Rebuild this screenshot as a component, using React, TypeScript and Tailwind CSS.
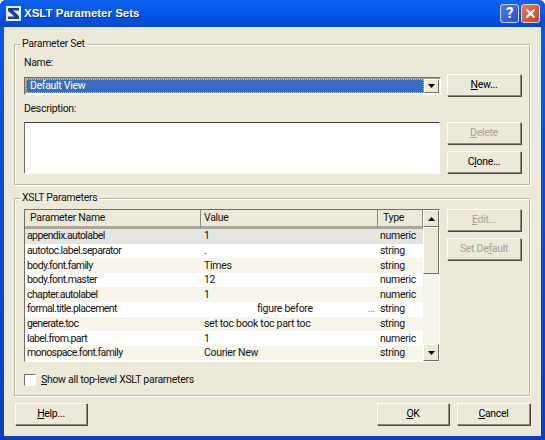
import type { ReactNode } from "react";

const rows = [
  ["appendix.autolabel", "1", "numeric"],
  ["autotoc.label.separator", ".", "string"],
  ["body.font.family", "Times", "string"],
  ["body.font.master", "12", "numeric"],
  ["chapter.autolabel", "1", "numeric"],
  ["formal.title.placement", "figure before", "string"],
  ["generate.toc", "set toc book toc part toc", "string"],
  ["label.from.part", "1", "numeric"],
  ["monospace.font.family", "Courier New", "string"],
];

const rowColors = [
  "bg-[#e6e4e0]",
  "bg-white",
  "bg-[#f8f6ea]",
  "bg-white",
  "bg-[#f8f6ea]",
  "bg-white",
  "bg-[#f8f6ea]",
  "bg-white",
  "bg-[#f8f6ea]",
];

function Btn({
  children,
  disabled,
  className = "",
}: {
  children: ReactNode;
  disabled?: boolean;
  className?: string;
}) {
  return (
    <button
      className={`flex h-[22px] items-center justify-center border border-t-white border-l-white border-r-[#8c8a7c] border-b-[#8c8a7c] bg-[#ece9d8] shadow-[1px_1px_0_#4a4940] ${disabled ? "text-[#a5a293]" : "text-black"} ${className}`}
    >
      {children}
    </button>
  );
}

function Group({
  title,
  children,
  className = "",
}: {
  title: string;
  children: ReactNode;
  className?: string;
}) {
  return (
    <fieldset
      className={`border border-[#bdbaa8] shadow-[inset_1px_1px_0_#fff,1px_1px_0_#fff] ${className}`}
    >
      <legend className="-ml-[4px] px-[2px] leading-[12px]">{title}</legend>
      {children}
    </fieldset>
  );
}

function ScrollArrow({ up }: { up?: boolean }) {
  return (
    <div className="flex h-[17px] w-[16px] shrink-0 items-center justify-center border border-t-white border-l-white border-r-[#716f64] border-b-[#716f64] bg-[#ece9d8]">
      <svg width="7" height="4" viewBox="0 0 7 4">
        <path d={up ? "M3.5 0L7 4H0z" : "M0 0h7L3.5 4z"} fill="#000" />
      </svg>
    </div>
  );
}

export default function App() {
  return (
    <div className="flex h-[440px] w-[545px] flex-col overflow-hidden rounded-t-[6px] bg-gradient-to-b from-[#0a5ae8] to-[#0a3fc4] font-['Roboto',sans-serif] text-[10.500px] tracking-[-0.3px] text-[#111]">
      <div className="flex h-[27px] shrink-0 items-center bg-gradient-to-b from-[#0f62ee] via-[#0557e6] to-[#0448d4] pr-[5px] pl-[6px]">
        <svg width="15" height="15" viewBox="0 0 15 15" className="mr-[3px]">
          <rect width="15" height="15" fill="#e6ecf8" />
          <path d="M2 2h11v2.500H7l6 5.500v3H2v-2.500h6.500L2 5z" fill="#1b3f8f" />
        </svg>
        <span className="font-['Liberation_Sans',sans-serif] text-[11.500px] font-bold tracking-normal text-white [text-shadow:1px_1px_0_#0a2a8a]">
          XSLT Parameter Sets
        </span>
        <div className="ml-auto flex gap-[2px]">
          <div className="flex size-[19px] items-center justify-center rounded-[3px] border border-[#c8d4f4] bg-gradient-to-br from-[#4f78e4] to-[#2a50c8] text-[15px] leading-none font-bold text-white">
            ?
          </div>
          <div className="flex size-[19px] items-center justify-center rounded-[3px] border border-[#f0d0c4] bg-gradient-to-br from-[#e87a50] to-[#c8401c]">
            <svg width="11" height="11" viewBox="0 0 11 11">
              <path d="M1.500 1.500l8 8M9.500 1.500l-8 8" stroke="#fff" strokeWidth="2.200" />
            </svg>
          </div>
        </div>
      </div>
      <div className="mx-[4px] mb-[4px] flex flex-1 flex-col bg-[#ece9d8] pt-[11px] pr-[11px] pl-[10px]">
        <Group title="Parameter Set" className="h-[147px] pr-[8px] pl-[9px]">
          <div className="mt-[7px] leading-[12px]">Name:</div>
          <div className="mt-[8px] flex gap-[6px]">
            <div className="flex-1">
              <div className="flex h-[18px] items-center border border-t-[#716f64] border-l-[#716f64] border-r-white border-b-white bg-white p-[1px] shadow-[inset_1px_1px_0_#aca899]">
                <div className="flex h-full flex-1 items-center border border-dotted border-[#c9c39f] bg-[#3a6cc4] pl-[3px] text-white">
                  Default View
                </div>
                <div className="flex h-full w-[15px] items-center justify-center border border-t-white border-l-white border-r-[#716f64] border-b-[#716f64] bg-[#ece9d8]">
                  <svg width="7" height="4" viewBox="0 0 7 4">
                    <path d="M0 0h7L3.500 4z" fill="#000" />
                  </svg>
                </div>
              </div>
            </div>
            <Btn className="-mt-[3px] w-[74px]">
              <span>
                <u>N</u>ew...
              </span>
            </Btn>
          </div>
          <div className="mt-[7px] leading-[12px]">Description:</div>
          <div className="mt-[7px] flex gap-[7px]">
            <div className="h-[52px] flex-1 border border-t-[#3f3e38] border-l-[#716f64] border-r-white border-b-white bg-white" />
            <div className="flex w-[74px] flex-col gap-[7px]">
              <Btn disabled className="w-full">
                <span>
                  <u>D</u>elete
                </span>
              </Btn>
              <Btn className="w-full">
                <span>
                  C<u>l</u>one...
                </span>
              </Btn>
            </div>
          </div>
        </Group>
        <Group title="XSLT Parameters" className="mt-[7px] h-[204px] pr-[8px] pl-[9px]">
          <div className="mt-[5px] flex gap-[7px]">
            <div className="flex h-[153px] flex-1 border border-t-[#716f64] border-l-[#716f64] border-r-white border-b-white bg-white">
              <div className="flex-1">
                <div className="flex h-[19px] bg-[#ece9d8]">
                  <div className="flex w-[176px] items-center border-r border-b-[3px] border-r-[#8c8a7c] border-b-[#aca899] pl-[5px]">
                    Parameter Name
                  </div>
                  <div className="flex w-[177px] items-center border-r border-b-[3px] border-r-[#8c8a7c] border-b-[#aca899] pl-[3px]">
                    Value
                  </div>
                  <div className="flex flex-1 items-center border-r border-b-[3px] border-r-[#8c8a7c] border-b-[#aca899] pl-[5px]">
                    Type
                  </div>
                </div>
                {rows.map((row, i) => (
                  <div key={row[0]} className={`flex h-[14.600px] items-center ${rowColors[i]}`}>
                    <div className="w-[176px] pl-[2px] tracking-[-0.6px]">{row[0]}</div>
                    <div className={`flex w-[177px] pl-[3px] ${row[1] === "figure before" ? "pr-[3px] pl-[56px]" : ""}`}>
                      {row[1]}
                      {row[1] === "figure before" && (
                        <span className="ml-auto text-[#7a7094]">...</span>
                      )}
                    </div>
                    <div className="flex-1 pl-[2px]">{row[2]}</div>
                  </div>
                ))}
              </div>
              <div className="flex w-[16px] flex-col bg-[#f4f3ec]">
                <ScrollArrow up />
                <div className="h-[47px] shrink-0 border border-t-white border-l-white border-r-[#716f64] border-b-[#716f64] bg-[#ece9d8]" />
                <div className="flex-1" />
                <ScrollArrow />
              </div>
            </div>
            <div className="flex w-[74px] flex-col gap-[7px]">
              <Btn disabled className="w-full">
                <span>
                  <u>E</u>dit...
                </span>
              </Btn>
              <Btn disabled className="w-full">
                <span>
                  Set De<u>f</u>ault
                </span>
              </Btn>
            </div>
          </div>
          <div className="mt-[10px] flex items-center">
            <div className="size-[12px] border border-t-[#716f64] border-l-[#716f64] border-r-white border-b-white bg-white" />
            <span className="ml-[5px]">
              <u>S</u>how all top-level XSLT parameters
            </span>
          </div>
        </Group>
        <div className="mt-[7px] flex">
          <Btn className="ml-[1px] w-[72px]">
            <span>
              <u>H</u>elp...
            </span>
          </Btn>
          <Btn className="ml-auto w-[72px]">
            <span>
              <u>O</u>K
            </span>
          </Btn>
          <Btn className="ml-[8px] w-[73px]">
            <span>
              <u>C</u>ancel
            </span>
          </Btn>
        </div>
      </div>
    </div>
  );
}
